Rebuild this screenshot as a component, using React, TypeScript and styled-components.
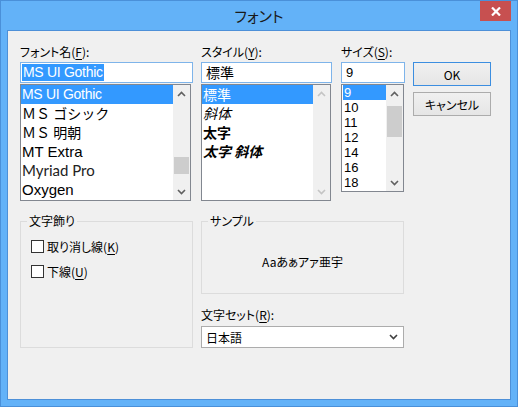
import styled, { createGlobalStyle } from "styled-components";

const GlobalStyle = createGlobalStyle`
  html, body {
    margin: 0;
    padding: 0;
    background: #ffffff;
  }
  body {
    font-family: "Noto Sans CJK JP", "Noto Sans", sans-serif;
    font-feature-settings: "palt";
    color: #000;
  }
`;

type Face = "ui" | "gothic" | "mincho" | "mt" | "myriad" | "oxygen" | "ja" | "num";

const faces: Record<Face, string> = {
  ui: `font-family: "Liberation Sans", sans-serif; font-size: 14px; letter-spacing: -0.3px;`,
  gothic: `font-family: "Noto Sans CJK JP", sans-serif; font-size: 14px; font-feature-settings: normal;`,
  mincho: `font-family: "Noto Sans CJK JP", sans-serif; font-size: 14px; font-feature-settings: normal;`,
  mt: `font-family: "Liberation Sans", sans-serif; font-size: 15px;`,
  myriad: `font-family: Lato, "Liberation Sans", sans-serif; font-size: 15px; color: #222;`,
  oxygen: `font-family: "Liberation Sans", sans-serif; font-size: 15px;`,
  ja: `font-family: "Noto Sans CJK JP", sans-serif; font-size: 14px;`,
  num: `font-family: "Liberation Sans", sans-serif; font-size: 13px;`,
};

const fonts: { name: string; face: Face }[] = [
  { name: "MS UI Gothic", face: "ui" },
  { name: "ＭＳ ゴシック", face: "gothic" },
  { name: "ＭＳ 明朝", face: "mincho" },
  { name: "MT Extra", face: "mt" },
  { name: "Myriad Pro", face: "myriad" },
  { name: "Oxygen", face: "oxygen" },
];

const styles = [
  { name: "標準", bold: false, italic: false },
  { name: "斜体", bold: false, italic: true },
  { name: "太字", bold: true, italic: false },
  { name: "太字 斜体", bold: true, italic: true },
];

const sizes = ["9", "10", "11", "12", "14", "16", "18"];

function Chevron({ up, color }: { up?: boolean; color: string }) {
  return (
    <svg width="9" height="6" viewBox="0 0 9 6">
      <polyline
        points={up ? "1,5 4.5,1.5 8,5" : "1,1 4.5,4.5 8,1"}
        fill="none"
        stroke={color}
        strokeWidth="1.6"
      />
    </svg>
  );
}

function Scrollbar({ thumbTop, thumbHeight, disabled }: { thumbTop?: number; thumbHeight?: number; disabled?: boolean }) {
  const color = disabled ? "#c4c4c4" : "#606060";
  return (
    <ScrollTrack>
      <ArrowButton>
        <Chevron up color={color} />
      </ArrowButton>
      <TrackBody>
        {thumbHeight ? <Thumb style={{ marginTop: thumbTop, height: thumbHeight }} /> : null}
      </TrackBody>
      <ArrowButton>
        <Chevron color={color} />
      </ArrowButton>
    </ScrollTrack>
  );
}

function Mn({ children }: { children: string }) {
  return <Underline>{children}</Underline>;
}

export default function App() {
  return (
    <>
      <GlobalStyle />
      <Window>
        <TitleBar>
          <Title>フォント</Title>
          <CloseButton>
            <svg width="10" height="9" viewBox="0 0 10 9">
              <path d="M1 0.5 L9 8.5 M9 0.5 L1 8.5" stroke="#fff" strokeWidth="2.2" />
            </svg>
          </CloseButton>
        </TitleBar>
        <Client>
          <TopRow>
            <Column $width={173} $gap={8}>
              <Label>
                フォント名(<Mn>F</Mn>):
              </Label>
              <TextBox>
                <Selection>MS UI Gothic</Selection>
              </TextBox>
              <ListBox $width={171} $height={117}>
                <Items>
                  {fonts.map((f, i) => (
                    <Item key={f.name} $face={f.face} $row={19} $selected={i === 0}>
                      {f.name}
                    </Item>
                  ))}
                </Items>
                <Scrollbar thumbTop={55} thumbHeight={17} />
              </ListBox>
            </Column>
            <Column $width={131} $gap={9}>
              <Label>
                スタイル(<Mn>Y</Mn>):
              </Label>
              <TextBox>
                <Value $face="ja">標準</Value>
              </TextBox>
              <ListBox $width={130} $height={117}>
                <Items>
                  {styles.map((s, i) => (
                    <Item
                      key={s.name}
                      $face="ja"
                      $row={19}
                      $selected={i === 0}
                      $bold={s.bold}
                      $italic={s.italic}
                    >
                      {s.name}
                    </Item>
                  ))}
                </Items>
                <Scrollbar disabled />
              </ListBox>
            </Column>
            <Column $width={64} $gap={8}>
              <Label>
                サイズ(<Mn>S</Mn>):
              </Label>
              <TextBox>
                <Value $face="num">9</Value>
              </TextBox>
              <ListBox $width={63} $height={108}>
                <Items $inset>
                  {sizes.map((s, i) => (
                    <Item key={s} $face="num" $row={15} $selected={i === 0}>
                      {s}
                    </Item>
                  ))}
                </Items>
                <Scrollbar thumbTop={4} thumbHeight={31} />
              </ListBox>
            </Column>
            <ButtonColumn>
              <Button $default>OK</Button>
              <Button>キャンセル</Button>
            </ButtonColumn>
          </TopRow>
          <BottomRow>
            <Group $width={173} $height={135}>
              <Legend>文字飾り</Legend>
              <CheckList>
                <CheckRow>
                  <CheckBox />
                  <span>
                    取り消し線(<Mn>K</Mn>)
                  </span>
                </CheckRow>
                <CheckRow>
                  <CheckBox />
                  <span>
                    下線(<Mn>U</Mn>)
                  </span>
                </CheckRow>
              </CheckList>
            </Group>
            <RightColumn>
              <Group $width={203} $height={81}>
                <Legend>サンプル</Legend>
                <SampleText>Aaあぁアァ亜宇</SampleText>
              </Group>
              <CharsetLabel>
                文字セット(<Mn>R</Mn>):
              </CharsetLabel>
              <Select>
                <span>日本語</span>
                <Chevron color="#404040" />
              </Select>
            </RightColumn>
          </BottomRow>
        </Client>
      </Window>
    </>
  );
}

const Window = styled.div`
  width: 518px;
  height: 407px;
  box-sizing: border-box;
  background: #63b2f8;
  border: 1px solid #4a90d9;
  padding: 0 6px 6px;
  display: flex;
  flex-direction: column;
`;

const TitleBar = styled.div`
  height: 29px;
  display: grid;
  grid-template-columns: 1fr auto 1fr;
  align-items: start;
`;

const Title = styled.div`
  grid-column: 2;
  font-size: 15px;
  line-height: 29px;
  color: #1a1a1a;
`;

const CloseButton = styled.div`
  grid-column: 3;
  justify-self: end;
  width: 31px;
  height: 20px;
  background: #c75050;
  display: flex;
  align-items: center;
  justify-content: center;
`;

const Client = styled.div`
  flex: 1;
  border: 1px solid #4d90d8;
  background: #f0f0f0;
  padding: 13px 0 0 12px;
  display: flex;
  flex-direction: column;
  font-size: 12px;
`;

const TopRow = styled.div`
  display: flex;
  align-items: flex-start;
`;

const Column = styled.div<{ $width: number; $gap: number }>`
  width: ${({ $width }) => $width}px;
  margin-right: ${({ $gap }) => $gap}px;
  display: flex;
  flex-direction: column;
`;

const Label = styled.div`
  font-size: 12px;
  line-height: 16px;
  height: 16px;
  margin-bottom: 2px;
  white-space: nowrap;
`;

const Underline = styled.span`
  text-decoration: underline;
  text-underline-offset: 2px;
`;

const TextBox = styled.div`
  height: 21px;
  box-sizing: border-box;
  border: 1px solid #7eb4ea;
  background: #fff;
  display: flex;
  align-items: center;
  padding-left: 1px;
  overflow: hidden;
`;

const Selection = styled.span`
  font-family: "Liberation Sans", sans-serif;
  font-size: 14px;
  letter-spacing: -0.3px;
  line-height: 17px;
  background: #3399ff;
  color: #fff;
  padding: 0 1px;
`;

const Value = styled.span<{ $face: Face }>`
  ${({ $face }) => faces[$face]}
  padding-left: 3px;
  line-height: 17px;
`;

const ListBox = styled.div<{ $width: number; $height: number }>`
  width: ${({ $width }) => $width}px;
  height: ${({ $height }) => $height}px;
  box-sizing: border-box;
  margin-top: 1px;
  border: 1px solid #828790;
  background: #fff;
  display: flex;
`;

const Items = styled.div<{ $inset?: boolean }>`
  flex: 1;
  display: flex;
  flex-direction: column;
  padding-left: ${({ $inset }) => ($inset ? "1px" : "0")};
  overflow: hidden;
`;

const Item = styled.div<{
  $face: Face;
  $row: number;
  $selected?: boolean;
  $bold?: boolean;
  $italic?: boolean;
}>`
  ${({ $face }) => faces[$face]}
  height: ${({ $row }) => $row}px;
  line-height: ${({ $row }) => $row}px;
  padding-left: 1px;
  white-space: nowrap;
  background: ${({ $selected }) => ($selected ? "#3399ff" : "transparent")};
  ${({ $selected }) => ($selected ? "color: #fff;" : "")}
  font-weight: ${({ $bold }) => ($bold ? 700 : 400)};
  font-style: ${({ $italic }) => ($italic ? "italic" : "normal")};
`;

const ScrollTrack = styled.div`
  width: 17px;
  background: #f0f0f0;
  display: flex;
  flex-direction: column;
`;

const ArrowButton = styled.div`
  height: 17px;
  display: flex;
  align-items: center;
  justify-content: center;
`;

const TrackBody = styled.div`
  flex: 1;
  display: flex;
  flex-direction: column;
`;

const Thumb = styled.div`
  margin-left: 1px;
  margin-right: 1px;
  background: #cdcdcd;
`;

const ButtonColumn = styled.div`
  width: 78px;
  margin-top: 18px;
  display: flex;
  flex-direction: column;
  gap: 6px;
`;

const Button = styled.div<{ $default?: boolean }>`
  height: 24px;
  box-sizing: border-box;
  border: 1px solid ${({ $default }) => ($default ? "#3c8ee0" : "#acacac")};
  background: linear-gradient(#f0f0f0, #e5e5e5);
  display: flex;
  align-items: center;
  justify-content: center;
  font-size: 12px;
`;

const BottomRow = styled.div`
  display: flex;
  align-items: flex-start;
  margin-top: 12px;
  gap: 8px;
`;

const Group = styled.fieldset<{ $width: number; $height: number }>`
  width: ${({ $width }) => $width}px;
  height: ${({ $height }) => $height}px;
  box-sizing: border-box;
  margin: 0;
  padding: 0 0 0 6px;
  border: 1px solid #dcdcdc;
  min-width: 0;
`;

const Legend = styled.legend`
  padding: 0 2px;
  font-size: 12px;
  line-height: 16px;
`;

const CheckList = styled.div`
  padding: 5px 0 0 4px;
  display: flex;
  flex-direction: column;
`;

const CheckRow = styled.div`
  height: 25px;
  display: flex;
  align-items: center;
  gap: 3px;
  font-size: 12px;
`;

const CheckBox = styled.div`
  width: 13px;
  height: 13px;
  box-sizing: border-box;
  border: 1px solid #333333;
  background: #fff;
`;

const RightColumn = styled.div`
  width: 203px;
  display: flex;
  flex-direction: column;
`;

const SampleText = styled.div`
  margin: 25px 0 0 -6px;
  text-align: center;
  font-size: 12px;
  line-height: 16px;
`;

const CharsetLabel = styled.div`
  margin-top: 13px;
  font-size: 12px;
  line-height: 16px;
  height: 16px;
`;

const Select = styled.div`
  margin-top: 3px;
  height: 22px;
  box-sizing: border-box;
  border: 1px solid #acacac;
  background: #fff;
  display: flex;
  align-items: center;
  justify-content: space-between;
  padding: 0 5px 0 4px;
  font-size: 12px;
`;
